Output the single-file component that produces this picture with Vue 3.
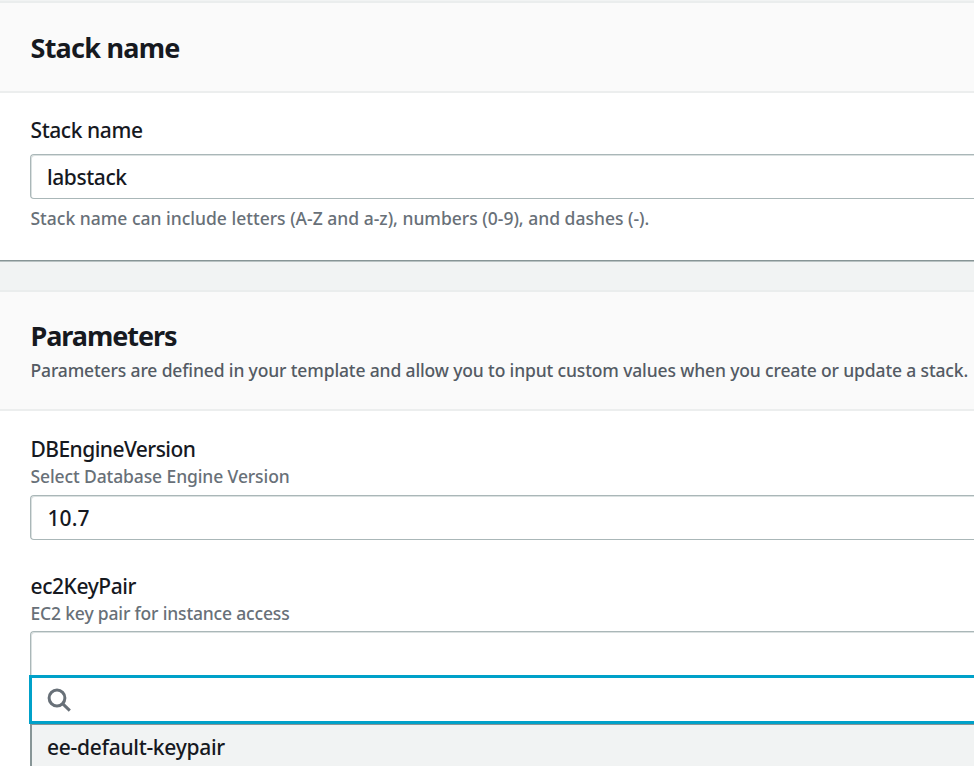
<script setup>
import { ref } from 'vue'

const stackName = ref('labstack')
const engineVersion = ref('10.7')
const keyPairs = ['ee-default-keypair']
</script>

<template>
  <main class="page">
    <section class="panel">
      <header class="panel-header">
        <h2 class="title">Stack name</h2>
      </header>
      <div class="panel-body stack-body">
        <label class="label">Stack name</label>
        <div class="field"><span>{{ stackName }}</span></div>
        <p class="hint constraint">Stack name can include letters (A-Z and a-z), numbers (0-9), and dashes (-).</p>
      </div>
    </section>

    <section class="panel">
      <header class="panel-header tall">
        <h2 class="title parameters">Parameters</h2>
        <p class="description">Parameters are defined in your template and allow you to input custom values when you create or update a stack.</p>
      </header>
      <div class="panel-body params-body">
        <div class="group">
          <label class="label engine">DBEngineVersion</label>
          <p class="hint">Select Database Engine Version</p>
          <div class="field"><span class="number">{{ engineVersion }}</span></div>
        </div>
        <div class="group">
          <label class="label">ec2KeyPair</label>
          <p class="hint key-hint">EC2 key pair for instance access</p>
          <div class="field open"></div>
          <div class="search">
            <svg class="search-icon" viewBox="0 0 24 24" fill="none" stroke="#687078" stroke-width="3">
              <circle cx="10" cy="10" r="7.9" />
              <path d="M15.6 15.6L22.8 22.6" />
            </svg>
          </div>
          <ul class="options">
            <li v-for="pair in keyPairs" :key="pair" class="option">{{ pair }}</li>
          </ul>
        </div>
      </div>
    </section>
  </main>
</template>

<style>
body {
  margin: 0;
  overflow: hidden;
}
</style>

<style scoped>
.page {
  box-sizing: border-box;
  height: 766px;
  overflow: hidden;
  padding-top: 1px;
  display: flex;
  flex-direction: column;
  gap: 29px;
  background: #f1f3f3;
  color: #16191f;
  font-family: "Noto Sans", "Open Sans", sans-serif;
  font-size: 21px;
  font-weight: 500;
  letter-spacing: -0.42px;
}
.panel {
  flex: none;
  background: #fff;
}
.panel:first-child {
  border-bottom: 1px solid #879596;
  box-shadow: 0 1px 0 #b9c2c2;
}
.panel-header {
  box-sizing: border-box;
  height: 92px;
  padding: 26px 0 0 30.5px;
  background: #fafafa;
  border-top: 2px solid #eaeded;
  border-bottom: 2px solid #eceeee;
}
.panel-header.tall {
  height: 121px;
  padding-top: 25px;
}
.title {
  margin: 0;
  font-size: 27px;
  font-weight: 700;
  line-height: 38px;
  letter-spacing: -0.75px;
}
.title.parameters {
  letter-spacing: -1.05px;
}
.description {
  margin: 0;
  font-size: 17.5px;
  line-height: 30px;
  letter-spacing: -0.14px;
  white-space: nowrap;
  color: #545b64;
}
.panel-body {
  padding-left: 30px;
}
.stack-body {
  height: 167px;
  box-sizing: border-box;
  padding-top: 22px;
}
.stack-body .field {
  margin-top: 9px;
}
.label {
  display: block;
  padding-left: 0.5px;
  line-height: 30px;
}
.label.engine {
  letter-spacing: -0.56px;
}
.hint {
  margin: 0;
  padding-left: 0.5px;
  font-size: 17.5px;
  line-height: 24px;
  letter-spacing: -0.11px;
  color: #687078;
}
.hint.constraint {
  padding-top: 7px;
  letter-spacing: 0;
}
.hint.key-hint {
  letter-spacing: -0.17px;
}
.field {
  box-sizing: border-box;
  height: 45px;
  margin-top: 7px;
  padding: 1px 0 0 16px;
  display: flex;
  align-items: center;
  border: 1px solid #aab7b8;
  border-right: 0;
  border-radius: 4px 0 0 4px;
  box-shadow: inset 1px 1px 0 #dbe1e1;
  background: #fff;
}
.number {
  padding-left: 0.5px;
  letter-spacing: 0.1px;
}
.params-body {
  padding-top: 23px;
  display: flex;
  flex-direction: column;
  gap: 31px;
}
.field.open {
  height: 44px;
  margin-top: 6px;
  border-bottom: 0;
  border-radius: 4px 0 0 0;
}
.search {
  box-sizing: border-box;
  height: 49px;
  margin-left: -1px;
  padding-left: 15px;
  display: flex;
  align-items: center;
  border: 3px solid #00a1c9;
  border-right: 0;
  background: #fff;
}
.search-icon {
  width: 24px;
  height: 24px;
}
.options {
  margin: 0;
  padding: 0;
  list-style: none;
  border-left: 2px solid #879596;
  border-top: 1px solid #879596;
  background: #f1f3f3;
}
.option {
  height: 60px;
  padding-left: 15px;
  line-height: 44px;
  letter-spacing: -0.29px;
}
</style>
